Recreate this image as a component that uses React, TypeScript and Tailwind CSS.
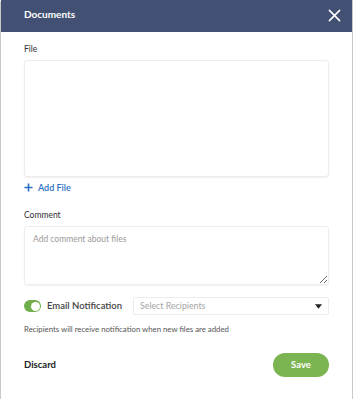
import React from 'react';

export default function App() {
  const [notify, setNotify] = React.useState(true);

  return (
    <div className="h-[399px] w-[353px] overflow-hidden bg-white font-['Lato','Liberation_Sans',sans-serif]">
      <div className="flex h-full flex-col rounded-tl-[3px] border-x border-[#c9c9c9]">
        {/* Header */}
        <div className="flex h-[32px] items-center justify-between bg-[#425173] pb-[3px] pl-[23px] pr-[11px]">
          <span className="text-[10px] font-bold text-white">Documents</span>
          <svg width="13" height="13" viewBox="0 0 14 14" className="mt-[2px] text-white">
            <path d="M1.5 1.5 12.5 12.5 M12.5 1.5 1.5 12.5" stroke="currentColor" strokeWidth="1.7" strokeLinecap="round" />
          </svg>
        </div>

        {/* Body */}
        <div className="flex flex-col px-[23px]">
          <label className="mt-[11px] text-[8.5px] text-[#333]">File</label>
          <div className="mt-[4px] h-[117px] rounded-[3px] border border-[#ececec] shadow-[0_1px_2px_rgba(0,0,0,0.06)]" />

          <button className="mt-[4px] flex items-center gap-[5px] text-[9px] font-semibold text-[#2b6fc2]">
            <svg width="9" height="9" viewBox="0 0 10 10">
              <path d="M5 0.5v9M0.5 5h9" stroke="currentColor" strokeWidth="1.8" />
            </svg>
            Add File
          </button>

          <label className="mt-[15px] text-[8.5px] text-[#333]">Comment</label>
          <textarea
            placeholder="Add comment about files"
            className="mt-[4px] h-[59px] resize-y rounded-[3px] border border-[#ececec] px-[8px] py-[6px] text-[8.5px] text-[#333] outline-none shadow-[0_1px_2px_rgba(0,0,0,0.06)] placeholder:text-[#9a9a9a]"
          />

          <div className="mt-[12px] flex items-center">
            <button
              onClick={() => setNotify(!notify)}
              className={`relative h-[12px] w-[17px] rounded-full ${notify ? 'bg-[#6fae4a]' : 'bg-[#ccc]'}`}
            >
              <span className={`absolute top-[1.5px] h-[9px] w-[9px] rounded-full bg-white ${notify ? 'right-[1.5px]' : 'left-[1.5px]'}`} />
            </button>
            <span className="ml-[6px] text-[9.5px] font-semibold text-[#444]">Email Notification</span>
            <div className="ml-auto flex h-[18px] w-[196px] items-center justify-between rounded-[2px] border border-[#ececec] pl-[6px] pr-[6px]">
              <span className="text-[8.8px] text-[#a5a5a5]">Select Recipients</span>
              <svg width="7" height="5" viewBox="0 0 8 5">
                <path d="M0 0h8L4 5z" fill="#222" />
              </svg>
            </div>
          </div>

          <p className="mt-[9px] text-[7.8px] text-[#555]">Recipients will receive notification when new files are added</p>
        </div>

        {/* Footer */}
        <div className="mt-[17px] flex items-center justify-between pl-[23px] pr-[23px]">
          <button className="text-[9.5px] font-bold text-[#222]">Discard</button>
          <button className="h-[24px] w-[56px] rounded-full bg-[#7cb452] text-[9.5px] font-bold text-white">Save</button>
        </div>
      </div>
    </div>
  );
}
